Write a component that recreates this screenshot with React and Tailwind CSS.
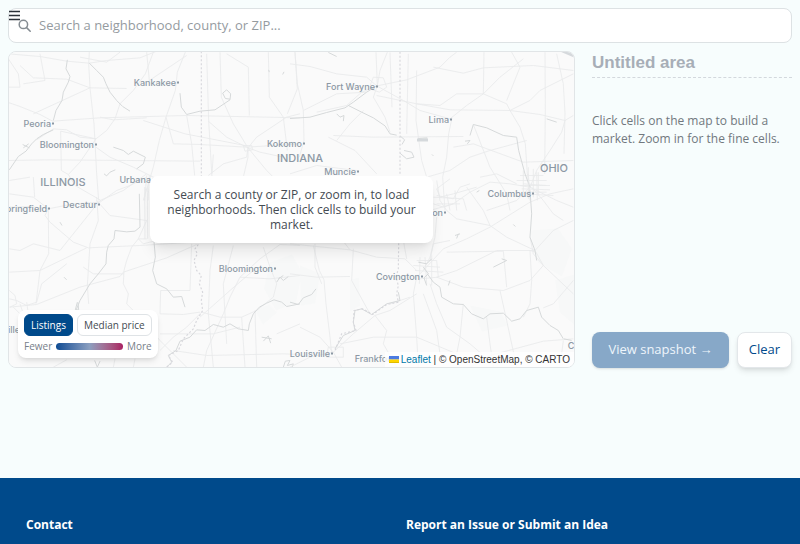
import { useState } from 'react';

const CITIES = [
  { name: 'Kankakee', x: 176, y: 85 },
  { name: 'Fort Wayne', x: 375, y: 89 },
  { name: 'Peoria', x: 51, y: 126 },
  { name: 'Lima', x: 449, y: 122 },
  { name: 'Bloomington', x: 94, y: 147 },
  { name: 'Kokomo', x: 302, y: 146 },
  { name: 'Muncie', x: 356, y: 174 },
  { name: 'Urbana', x: 151, y: 182 },
  { name: 'Columbus', x: 531, y: 196 },
  { name: 'Decatur', x: 97, y: 207 },
  { name: 'Springfield', x: 47, y: 211 },
  { name: 'Dayton', x: 443, y: 215 },
  { name: 'Bloomington', x: 273, y: 271 },
  { name: 'Covington', x: 420, y: 279 },
  { name: 'Louisville', x: 330, y: 356 },
  { name: 'Frankfort', x: 394, y: 361 },
  { name: 'Belleville', x: 20, y: 332 },
];

const STATES = [
  { name: 'ILLINOIS', x: 63, y: 185 },
  { name: 'INDIANA', x: 300, y: 161 },
  { name: 'OHIO', x: 554, y: 171 },
];

// each tile is drawn at 3x and placed at its own origin
const TILES = [
  {
    x: 0,
    y: 0,
    rivers: [
      'M202 178L198 205L210 228L205 245L190 275L186 300L168 330L160 360',
      'M160 388L130 402L110 415L95 430L78 452L55 468L28 508',
      'M268 188L290 210L310 230L318 250L330 275L350 300L368 318L390 332',
      'M540 278L544 320L560 342L600 332L645 328L690 298L692 280L680 268L668 278L676 294L690 296',
      'M340 440L370 450L385 462L400 452L436 470L430 490L410 505',
      'M312 520L320 526L330 515L346 508M808 215L806 208M848 222L852 214M68 432L88 442M70 442L86 430',
    ],
    roads: [
      'M25 160L120 168L200 182L268 188L320 180L420 172L470 152',
      'M60 195L100 232L200 236L270 262L380 264M120 160L135 240L70 250',
      'M25 306L60 318L120 342L158 362L300 352L560 345L900 352',
      'M268 155L266 190L270 262L282 370L290 520L296 600',
      'M288 415L320 390L345 355L360 310L400 270L436 220L460 155',
      'M288 415L240 410L200 388L160 385L110 418M288 415L182 392L184 510L205 522',
      'M288 415L240 485L205 522L225 555L300 598',
      'M288 440L330 470L400 500L440 520L470 535',
      'M556 155L532 215L526 270L498 350L478 420L460 500L430 600',
      'M440 155L448 240L560 165M498 350L520 430L600 432L740 440L900 430',
      'M25 480L150 478L380 480L600 482M620 160L626 360L640 600',
      'M660 155L664 290L700 370L744 442L800 510L850 560',
      'M625 362L680 410L744 442L740 470L670 490L625 525M744 442L770 410L830 370L860 350L900 340',
      'M744 442L744 470L730 530M744 442L780 455L850 470M805 155L808 290L850 350L862 450',
      'M885 155L892 265L862 340M680 160L745 200L748 345M440 352L340 358L300 350',
      'M560 345L575 430L584 525M640 462L636 520M430 360L555 400L740 436',
      'M100 530L104 590M28 540L90 530M440 520L370 570L300 600M440 525L434 600M448 525L444 600M360 155L320 185L240 170',
      'M25 175L55 220L60 260L25 260M730 435L755 435L758 448L735 452Z M270 262L100 340',
    ],
    borders: ['M604 152L604 530'],
  },
  {
    x: 290,
    y: 40,
    rivers: [
      'M0 234L60 230L110 216L165 202L190 185L230 155L262 135',
      'M140 220L150 230L162 225L160 242M342 330L365 335L372 350L350 355L330 338',
      'M175 195L215 215L250 232L285 256L300 280L320 284',
      'M385 294L412 292M385 298L412 296M525 302L540 300L532 310M115 36L140 48',
      'M540 285L550 252L590 262L640 285L680 290L686 330L705 400L720 440',
      'M426 342L430 346M770 235L800 245M330 286L344 298L336 312',
    ],
    roads: [
      'M15 35L22 130L40 210L42 300L28 350',
      'M0 70L60 78L140 100L230 110L260 136L340 180L390 210L480 235',
      'M258 35L262 136L250 170L285 230L300 275',
      'M262 136L350 118L450 80L480 50L500 35M262 136L270 90L292 35',
      'M262 136L215 155L170 195L80 215M240 136L250 110L280 112L290 140L268 155L242 146Z',
      'M480 235L530 195L580 160L630 110L700 55',
      'M582 35L580 160L650 190L660 210L480 208L380 190L260 165',
      'M486 232L476 280L470 350L458 410L465 510M380 90L378 240L395 360L410 410',
      'M660 210L690 260L706 310L712 400L720 450M660 210L720 180L750 150L850 100',
      'M430 80L520 98L580 82L730 75L850 90M665 35L690 80L650 180',
      'M765 35L766 200L764 400M800 40L820 130L825 220L822 340M660 210L750 222L825 240L850 225',
      'M825 240L815 275L780 330L740 390L720 440M130 285L250 290L520 288',
      'M490 320L550 310L700 365L850 360M410 410L480 390L540 350L600 330L710 300',
      'M720 440L660 430L600 425L540 455L490 490L420 510M720 440L680 480L590 510M720 440L800 480L850 500',
      'M690 405L760 405M680 420L770 420M690 435L780 435M695 455L770 455M700 390L700 470M715 380L715 475M730 385L730 470M745 395L745 465',
      'M40 210L140 160L230 155M115 290L195 330L260 400M140 300L180 250L220 210M0 400L80 375L200 390',
      'M550 252L600 380L650 460L660 510M430 470L520 475L530 510M440 490L510 490M470 460L480 510M495 450L500 510',
      'M300 36L306 200M355 40L350 280M380 190L450 195L500 160L580 160',
    ],
    borders: ['M330 34L330 405'],
  },
  {
    x: 0,
    y: 170,
    rivers: [
      'M418 70L420 170L405 182L380 184L345 180L342 205L325 225L320 245L318 280L295 310L270 340L240 390L228 420',
      'M462 212L466 260L458 300L470 340L500 355L520 380L545 378L555 410',
      'M232 395L226 418L236 418L234 396M284 570L292 590L300 572',
      'M830 335L840 320L850 330L865 318M835 325L850 315M785 500L815 505M790 512L805 496L812 518',
      'M850 590L856 572L870 570L862 585L880 580L875 595M180 155L186 165M192 320L200 328',
      'M900 400L860 408L845 395L822 388L800 398L778 410L760 430L748 460L745 480L715 475L690 460L670 470L640 462L615 480L590 478L570 500L540 512L528 540L505 555L515 575L500 590',
    ],
    roads: [
      'M28 110L90 108L145 115L220 100L300 95L350 60L390 45L440 20',
      'M145 115L100 80L28 70M145 115L135 135L150 155L220 215L265 232',
      'M290 80L295 150L270 220L262 345L266 400M290 90L330 135L440 150',
      'M28 235L60 240L100 220L180 240L300 90M145 115L146 250L120 300L108 400',
      'M265 232L420 225L580 215M28 305L120 300L260 232',
      'M28 410L110 402L240 350L360 318L370 305L500 262L590 222',
      'M372 300L380 270L395 230L415 205L440 205M372 300L370 340L385 370L380 400L400 420',
      'M440 150L415 205L430 220L462 212M372 310L280 310L250 290M28 360L45 375L50 400L30 410',
      'M28 385L50 390L80 405L110 395L125 340L200 280M40 410L60 430M60 400L70 430M80 395L85 430',
      'M480 430L482 360L570 360L575 220M480 430L550 432L600 425M480 490L640 490L720 470',
      'M605 425L660 440L725 440L770 420L820 380M605 425L560 470L520 500L480 540',
      'M820 380L830 340L810 290L790 230M640 225L630 300L625 430L640 590M725 440L735 590',
      'M900 225L840 222L780 265L720 320L690 380L670 430L620 540L610 590',
      'M720 320L810 325L900 315M520 540L620 555L850 550L900 552M700 225L670 340L680 520',
      'M340 590L345 565M160 590L200 568M400 590L405 565M765 420L770 590M830 490L900 460',
      'M434 50L435 205M442 50L443 205M404 420L480 510L560 590M760 300L690 360L600 440',
    ],
    borders: ['M595 222L585 235L592 250L582 270L590 300L604 315L598 340L608 365L604 390L608 420L590 450L580 475L550 505L535 540L505 555L518 575L500 590'],
  },
  {
    x: 290,
    y: 170,
    rivers: [
      'M412 310L430 335L450 350L455 380L490 400L520 402L545 430L580 445L600 430L640 428L665 452L690 445L710 420L745 410L755 440L780 465L805 480L820 505',
      'M325 365L330 390L290 400L245 432L215 415L195 420L190 455L195 480L160 495L135 535',
      'M495 195L510 190M500 204L505 190M610 290L650 270L635 265M480 330L475 345M670 162L676 168',
      'M720 60L725 130L720 200L735 240L740 270M822 505L845 510M560 65L568 60',
      'M400 290L415 310L402 322L410 345M385 275L410 280L425 265M0 395L25 402L40 382L65 372L78 355',
    ],
    roads: [
      'M440 140L435 200L420 260L400 300L380 320L370 370L380 500L385 590',
      'M70 225L88 300L102 328L108 400L120 500L125 550M75 220L75 290L95 340',
      'M0 220L180 238L260 260L345 265L380 300M180 238L150 200',
      'M400 300L460 235L530 205L600 170L720 95L780 70L850 55',
      'M440 320L520 350L640 360L720 330L760 285L738 245L720 240',
      'M720 200L730 250L760 285L850 370M720 240L725 330L720 400L700 440',
      'M440 320L500 300L620 240L735 240M420 340L440 400L470 470L540 520L575 550',
      'M380 370L300 420L255 435L190 490L130 545M255 435L290 480L280 520L320 590',
      'M470 120L500 145L600 165L650 200L735 240M470 120L450 90L440 30',
      'M130 545L60 560L0 590M130 545L90 500L30 470M130 545L155 590M115 530L160 530L160 560L110 560Z',
      'M350 265L340 210M420 270L430 220L480 210M725 50L760 90L790 130L820 150M700 40L770 45M695 55L780 58M700 70L790 75M715 10L720 90M740 5L742 90',
      'M850 505L760 512L600 555L540 590M520 400L510 500L500 550M630 360L650 450L680 590',
      'M480 25L440 55L450 80L490 70L560 50M440 75L490 85L510 50L540 40M430 100L460 110L490 100',
      'M380 270L440 270L445 320L390 325M370 285L450 290M375 300L460 305M405 260L410 340M425 255L425 345M390 260L388 340',
      'M760 412L790 400L850 330M735 240L790 180L850 150M590 440L600 520L610 590M820 510L815 550',
      'M530 50L580 120L600 165M570 20L620 10L680 40M470 245L640 242L650 350M0 310L80 320L180 318',
      'M190 235L185 330L240 430M360 380L300 400M400 370L440 480L450 550M150 520L250 500L380 500L500 550',
    ],
    borders: ['M326 218L325 295L318 320L325 345L320 370L325 395L290 402L248 432L218 415L192 420L190 455L198 480L155 490L135 540'],
  },
];

function MapTiles() {
  return (
    <svg viewBox="9 51 565 316" preserveAspectRatio="xMidYMid slice" className="absolute inset-0 size-full" role="img" aria-label="Map">
      <rect x="0" y="0" width="800" height="544" fill="#fafafa" />
      <g fill="#f7f8f8">
        <path d="M270 262l22-8 10 18-6 30-20 8-12-22zM300 265l20 8-5 30-14 2zM350 280l9-3 1 28-10 6zM530 230l28-2 14 20-10 28-24-14zM555 280l19-6v50l-14-12zM470 305l30 6 8 14-26 6zM255 310l14-6 8 8-14 12z" />
      </g>
      {TILES.map((t) => (
        <g key={`${t.x}-${t.y}`} transform={`translate(${t.x} ${t.y}) scale(0.33333)`} fill="none" strokeLinejoin="round">
          {t.roads.map((d) => (
            <path key={d} d={d} stroke="#e9eaeb" strokeWidth="2.6" />
          ))}
          {t.rivers.map((d) => (
            <path key={d} d={d} stroke="#d6d9da" strokeWidth="3" />
          ))}
          {t.borders.map((d) => (
            <path key={d} d={d} stroke="#d8d8dd" strokeWidth="3.5" strokeDasharray="6 6" />
          ))}
        </g>
      ))}
      <path d="M560 51l14 6v-6zM417 138h11v3h-11z" fill="#d5d9dc" />
      <g fill="#8c98a4" className="font-['Inter',sans-serif] text-[9px] font-medium">
        {CITIES.map((c) => (
          <g key={`${c.name}-${c.x}`}>
            <text x={c.x} y={c.y} textAnchor="end">{c.name}</text>
            <rect x={c.x + 1} y={c.y - 4} width="2" height="2" />
          </g>
        ))}
      </g>
      <g fill="#8c98a4" textAnchor="middle" className="font-['Inter',sans-serif] text-[11px] font-medium">
        {STATES.map((s) => (
          <text key={s.name} x={s.x} y={s.y}>{s.name}</text>
        ))}
        <text x="571" y="348" className="text-[9px]">C</text>
      </g>
    </svg>
  );
}

function Legend({ metric, onChange }) {
  const active = 'rounded-md border border-[#004a8b] bg-[#004a8b] px-1.5 py-0.5 text-white';
  const idle = 'rounded-md border border-[#dfe3e6] bg-white px-1.5 py-0.5 text-[#444b52]';

  return (
    <div className="absolute bottom-[9px] left-[9px] rounded-lg bg-white px-1.5 py-1 text-[10px] leading-4 shadow-md">
      <div className="flex gap-1">
        <button type="button" onClick={() => onChange('listings')} className={metric === 'listings' ? active : idle}>Listings</button>
        <button type="button" onClick={() => onChange('price')} className={metric === 'price' ? active : idle}>Median price</button>
      </div>
      <div className="mt-0.5 flex items-center gap-1 text-[#77808a]">
        <span>Fewer</span>
        <span className="h-[7px] flex-1 rounded-full bg-linear-to-r from-[#0a4c93] via-[#8b9fc0] to-[#a81d62]" />
        <span>More</span>
      </div>
    </div>
  );
}

export default function App() {
  const [metric, setMetric] = useState('listings');
  const [query, setQuery] = useState('');
  const [areaName, setAreaName] = useState('');

  return (
    <div className="relative flex min-h-screen flex-col bg-[#f7fdfd] font-['Open_Sans',sans-serif]">
      <button type="button" aria-label="Menu" className="absolute top-2.5 left-[9px] z-10">
        <svg width="11" height="11" viewBox="0 0 11 11" stroke="#2b3138" strokeWidth="1.4">
          <path d="M0 1.5h11M0 5.5h11M0 9.5h11" />
        </svg>
      </button>

      <main className="flex flex-col gap-2 p-2">
        <label className="flex h-[35px] items-center gap-2 rounded-lg border border-[#dde2e4] bg-white px-[9px]">
          <svg width="13" height="13" viewBox="0 0 13 13" fill="none" stroke="#858c92" strokeWidth="1.5" strokeLinecap="round" aria-hidden="true">
            <circle cx="5.4" cy="5.4" r="4.2" />
            <path d="M8.6 8.6l3.6 3.6" />
          </svg>
          <input
            type="text"
            aria-label="Search"
            value={query}
            onChange={(e) => setQuery(e.target.value)}
            placeholder="Search a neighborhood, county, or ZIP..."
            className="min-w-0 flex-1 text-[13px] outline-none placeholder:text-[#959b9f]"
          />
        </label>

        <div className="flex gap-[17px]">
          <section className="relative h-[317px] min-w-0 flex-1 overflow-hidden rounded-lg border border-[#e1e5e7]">
            <MapTiles />
            <div className="absolute inset-0 flex items-center justify-center">
              <p className="w-1/2 rounded-lg bg-white px-4 py-[11px] text-center text-[12px] leading-[15px] text-[#444b52] shadow-lg">
                Search a county or ZIP, or zoom in, to load neighborhoods. Then click cells to build your market.
              </p>
            </div>
            <Legend metric={metric} onChange={setMetric} />
            <div className="absolute right-0 bottom-0 flex items-center gap-0.5 bg-white/80 px-1 font-['Liberation_Sans',sans-serif] text-[10px] leading-[15px] text-[#333333]">
              <svg width="10" height="7" viewBox="0 0 10 7" aria-hidden="true">
                <path fill="#4c7be1" d="M0 0h10v3.5H0z" />
                <path fill="#ffd500" d="M0 3.5h10V6H0z" />
                <path fill="#e0bc00" d="M0 6h10v1H0z" />
              </svg>
              <span>
                <a href="#leaflet" className="text-[#0078a8]">Leaflet</a> | © OpenStreetMap, © CARTO
              </span>
            </div>
          </section>

          <aside className="flex w-[200px] flex-col">
            <input
              type="text"
              aria-label="Area name"
              value={areaName}
              onChange={(e) => setAreaName(e.target.value)}
              placeholder="Untitled area"
              className="h-[27px] w-full border-b border-dashed border-[#d3d8dd] pb-0.5 font-['Liberation_Sans',sans-serif] text-[17px] font-bold outline-none placeholder:text-[#a7aeb7]"
            />
            <p className="mt-[34px] text-[12px] leading-[18px] text-[#71787e]">
              Click cells on the map to build a market. Zoom in for the fine cells.
            </p>
            <div className="mt-auto flex gap-2 text-[13px]">
              <button type="button" className="h-9 flex-1 rounded-lg bg-[#87a8c8] text-[#eef5fb] shadow-sm">View snapshot →</button>
              <button type="button" className="h-9 w-[55px] rounded-lg border border-[#e3e7ea] bg-white text-[#004a8b] shadow-md">Clear</button>
            </div>
          </aside>
        </div>
      </main>

      <footer className="mt-[102px] grid flex-1 grid-cols-2 gap-3 bg-[#004a8b] px-[26px] pt-[38px] text-[12px] font-bold text-white">
        <h2>Contact</h2>
        <h2>Report an Issue or Submit an Idea</h2>
      </footer>
    </div>
  );
}
